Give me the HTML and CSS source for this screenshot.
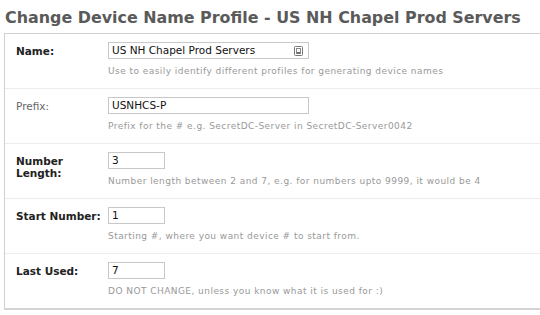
FILE: index.html
```html
<!DOCTYPE html>
<html>
<head>
<meta charset="utf-8">
<link rel="stylesheet" href="styles.css">
</head>
<body>
<h1 class="title">Change Device Name Profile - US NH Chapel Prod Servers</h1>
<div class="panel">
  <div class="row">
    <div class="label bold">Name:</div>
    <div class="field">
      <div class="input wide">US NH Chapel Prod Servers
        <svg class="autofill" width="9" height="10" viewBox="0 0 9 10"><rect x="0.5" y="0.5" width="8" height="9" rx="1" fill="#fff" stroke="#777"/><rect x="2.5" y="2.5" width="4" height="5" fill="none" stroke="#888"/><rect x="3" y="6" width="3" height="1.5" fill="#666"/></svg>
      </div>
      <div class="help">Use to easily identify different profiles for generating device names</div>
    </div>
  </div>
  <div class="row">
    <div class="label plain">Prefix:</div>
    <div class="field">
      <div class="input wide">USNHCS-P</div>
      <div class="help">Prefix for the # e.g. SecretDC-Server in SecretDC-Server0042</div>
    </div>
  </div>
  <div class="row">
    <div class="label bold">Number<br>Length:</div>
    <div class="field">
      <div class="input short">3</div>
      <div class="help">Number length between 2 and 7, e.g. for numbers upto 9999, it would be 4</div>
    </div>
  </div>
  <div class="row">
    <div class="label bold">Start Number:</div>
    <div class="field">
      <div class="input short">1</div>
      <div class="help">Starting #, where you want device # to start from.</div>
    </div>
  </div>
  <div class="row">
    <div class="label bold">Last Used:</div>
    <div class="field">
      <div class="input short">7</div>
      <div class="help">DO NOT CHANGE, unless you know what it is used for :)</div>
    </div>
  </div>
</div>
</body>
</html>
```
FILE: styles.css
```css
html, body {
  margin: 0;
  padding: 0;
  background: #fff;
  overflow: hidden;
  font-family: "DejaVu Sans", Verdana, sans-serif;
}
.title {
  margin: 0;
  padding: 8px 0 0 5px;
  height: 25px;
  font-size: 15.9px;
  line-height: 20px;
  font-weight: bold;
  color: #5a5a5a;
  white-space: nowrap;
}
.panel {
  margin-left: 4px;
  border: 1px solid #d0d0d0;
  border-right: none;
  border-bottom: 2px solid #d4d4d4;
}
.row {
  display: grid;
  grid-template-columns: 92px 1fr;
  height: 55px;
  box-sizing: border-box;
  padding: 8px 0 0 11px;
  border-top: 1px solid #ececec;
}
.row:first-child {
  border-top: none;
  height: 54px;
}
.label {
  font-size: 10.5px;
  line-height: 12px;
  padding-top: 3px;
}
.bold {
  font-weight: bold;
  color: #222;
}
.plain {
  color: #666;
}
.field {
  display: flex;
  flex-direction: column;
}
.input {
  position: relative;
  box-sizing: border-box;
  height: 17px;
  border: 1px solid #c8c8c8;
  font-size: 10.5px;
  line-height: 15px;
  padding-left: 3px;
  color: #111;
}
.wide {
  width: 201px;
}
.short {
  width: 57px;
}
.autofill {
  position: absolute;
  right: 5px;
  top: 3px;
}
.help {
  margin-top: 6px;
  font-size: 9px;
  line-height: 12px;
  letter-spacing: 0.45px;
  color: #999;
  white-space: nowrap;
}
```
